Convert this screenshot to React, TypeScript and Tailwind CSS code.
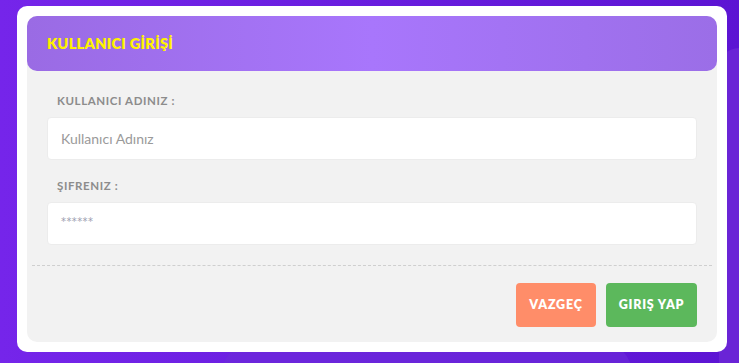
export default function App() {
  return (
    <div
      className="relative h-[363px] w-[739px] overflow-hidden bg-gradient-to-r from-[#7525ea] to-[#5c14d3] px-[17px] pt-[6px]"
      style={{ fontFamily: 'Lato, "Open Sans", sans-serif' }}
    >
      {/* faint shapes in the background */}
      <div className="absolute right-[-40px] top-[48px] h-[340px] w-[60px] rounded-[20px] bg-[#6a24d6]" />
      <div className="absolute bottom-[-70px] left-[222px] h-[90px] w-[410px] rounded-[30px] bg-[#6d2bd9] opacity-60" />

      <div className="relative h-[346px] w-[710px] rounded-[10px] bg-white p-[10px]">
        <div className="flex h-full flex-col rounded-[10px] bg-[#f2f2f2]">
          <div className="flex h-[55px] items-center rounded-[10px] bg-gradient-to-r from-[#9a6be4] via-[#a876fc] to-[#9b6ee7] pl-[20px]">
            <h2 className="text-[14.5px] font-extrabold tracking-[0.3px] text-[#fff200]">KULLANICI GİRİŞİ</h2>
          </div>

          <div className="flex flex-col px-[20px] pt-[22px]">
            <label className="mb-[8px] pl-[10px] text-[11.5px] font-bold leading-[16px] tracking-[0.6px] text-[#8c8c8c]">
              KULLANICI ADINIZ :
            </label>
            <input
              className="h-[43px] rounded-[4px] border border-[#ececec] bg-white px-[13px] text-[14px] text-[#555] outline-none placeholder:text-[#9a9a9a]"
              placeholder="Kullanıcı Adınız"
            />
            <label className="mb-[8px] mt-[18px] pl-[10px] text-[11.5px] font-bold leading-[16px] tracking-[0.6px] text-[#8c8c8c]">
              ŞIFRENIZ :
            </label>
            <div className="flex h-[43px] items-center rounded-[4px] border border-[#ececec] bg-white px-[13px]">
              <span className="pb-[3px] font-['DejaVu_Sans',sans-serif] text-[10px] leading-none tracking-[0.4px] text-[#9c9eb0]">
                ******
              </span>
            </div>
          </div>

          <div className="mx-[5px] mt-[20px] border-t border-dashed border-[#cfcfcf]" />

          <div className="flex justify-end gap-[10px] pr-[20px] pt-[17px]">
            <button className="h-[44px] w-[80px] rounded-[4px] bg-[#ff8d69] text-[12.5px] font-extrabold tracking-[0.8px] text-white">
              VAZGEÇ
            </button>
            <button className="h-[44px] w-[91px] rounded-[4px] bg-[#5cb85c] text-[12.5px] font-extrabold tracking-[0.8px] text-white">
              GIRIŞ YAP
            </button>
          </div>
        </div>
      </div>
    </div>
  );
}
